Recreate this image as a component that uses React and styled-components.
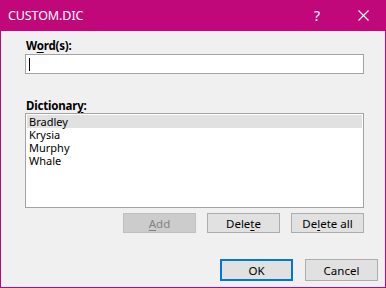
import React from "react";
import styled, { createGlobalStyle } from "styled-components";

const accent = "#c1087b";

const GlobalStyle = createGlobalStyle`
  html, body {
    margin: 0;
    padding: 0;
    background: #ffffff;
  }
  * {
    box-sizing: border-box;
  }
`;

const Window = styled.div`
  width: 386px;
  height: 288px;
  display: flex;
  flex-direction: column;
  background: #f0f0f0;
  border: 1px solid ${accent};
  border-top: none;
  font-family: "Noto Sans", "Open Sans", sans-serif;
  font-size: 12px;
  color: #000;
`;

const TitleBar = styled.div`
  height: 31px;
  flex-shrink: 0;
  display: flex;
  align-items: center;
  background: ${accent};
  color: #fff;
  padding-left: 8px;
  margin: 0 -1px;
`;

const Title = styled.span`
  flex: 1;
  font-size: 12.5px;
  letter-spacing: -0.1px;
`;

const TitleButton = styled.span`
  width: 46px;
  height: 31px;
  display: flex;
  align-items: center;
  justify-content: center;
  font-size: 14px;
`;

const Body = styled.div`
  display: flex;
  flex-direction: column;
  padding: 7px 21px 0 24px;
`;

const Label = styled.div`
  font-weight: bold;
  font-size: 11.5px;
  line-height: 15px;
  margin-left: 1px;
  margin-top: ${(p) => p.$top || 0}px;
  letter-spacing: -0.2px;
`;

const Input = styled.div`
  height: 20px;
  margin-top: 1px;
  background: #fff;
  border: 1px solid #a3a3a3;
  display: flex;
  align-items: center;
  padding-left: 3px;
`;

const Caret = styled.span`
  width: 1px;
  height: 13px;
  background: #000;
`;

const List = styled.div`
  height: 95px;
  background: #fff;
  border: 1px solid #a3a3a3;
  padding: 1px;
`;

const Item = styled.div`
  height: 13px;
  line-height: 13px;
  padding-left: 2px;
  font-size: 11px;
  background: ${(p) => (p.$selected ? "#e1e1e1" : "transparent")};
`;

const ButtonRow = styled.div`
  display: flex;
  justify-content: flex-end;
  gap: 11px;
  margin-top: 5px;
`;

const Button = styled.div`
  width: 73px;
  height: ${(p) => p.$h || 20}px;
  display: flex;
  align-items: center;
  justify-content: center;
  font-size: 11.5px;
  background: ${(p) => (p.$disabled ? "#cccccc" : "#e1e1e1")};
  color: ${(p) => (p.$disabled ? "#838383" : "#000")};
  border: ${(p) =>
    p.$primary ? "2px solid #0078d7" : p.$disabled ? "1px solid #bfbfbf" : "1px solid #adadad"};
`;

const Footer = styled.div`
  display: flex;
  justify-content: flex-end;
  gap: 12px;
  padding-right: 7px;
  margin-top: 26px;
`;

const U = styled.span`
  text-decoration: underline;
  text-underline-offset: 2px;
`;

const words = ["Bradley", "Krysia", "Murphy", "Whale"];

export default function App() {
  return (
    <>
      <GlobalStyle />
      <Window>
        <TitleBar>
          <Title>CUSTOM.DIC</Title>
          <TitleButton>?</TitleButton>
          <TitleButton>
            <svg width="11" height="11" viewBox="0 0 11 11">
              <path d="M0.5 0.5 L10.5 10.5 M10.5 0.5 L0.5 10.5" stroke="#fff" strokeWidth="1.1" />
            </svg>
          </TitleButton>
        </TitleBar>
        <Body>
          <Label>
            W<U>o</U>rd(s):
          </Label>
          <Input>
            <Caret />
          </Input>
          <Label $top={24}>
            Dictionar<U>y</U>:
          </Label>
          <List>
            {words.map((w, i) => (
              <Item key={w} $selected={i === 0}>
                {w}
              </Item>
            ))}
          </List>
          <ButtonRow>
            <Button $disabled>
              <U>A</U>dd
            </Button>
            <Button>
              Dele<U>t</U>e
            </Button>
            <Button>
              De<U>l</U>ete all
            </Button>
          </ButtonRow>
        </Body>
        <Footer>
          <Button $primary $h={22}>OK</Button>
          <Button $h={22}>Cancel</Button>
        </Footer>
      </Window>
    </>
  );
}
